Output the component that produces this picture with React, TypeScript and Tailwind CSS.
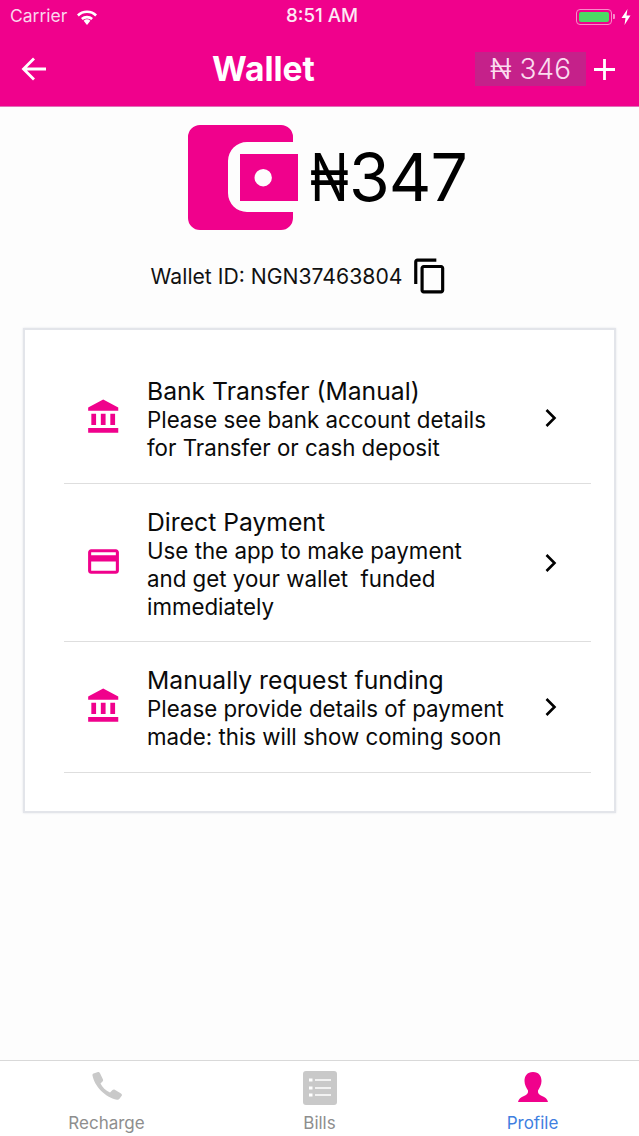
// App.tsx - wallet screen
const PINK = "#f0018c"

function BankIcon() {
  return (
    <svg className="mb-[6px]" width="38" height="38" viewBox="0 0 24 24" fill={PINK}>
      <path d="M4 10v7h3v-7H4zm6 0v7h3v-7h-3zM2 22h19v-3H2v3zm14-12v7h3v-7h-3zm-4.500-9L2 6v2h19V6l-9.500-5z" />
    </svg>
  )
}

function CardIcon() {
  return (
    <svg className="mb-[6px]" width="37" height="37" viewBox="0 0 24 24" fill={PINK}>
      <path d="M20 4H4c-1.110 0-1.990.89-1.990 2L2 18c0 1.110.89 2 2 2h16c1.110 0 2-.89 2-2V6c0-1.110-.89-2-2-2zm0 14H4v-6h16v6zm0-10H4V6h16v2z" />
    </svg>
  )
}

function Chevron() {
  return (
    <svg width="16" height="20" viewBox="0 0 16 20" fill="none" stroke="#000" strokeWidth="2.600">
      <path d="M3.500 2 L11.500 10 L3.500 18" />
    </svg>
  )
}

function WalletIcon() {
  return (
    <svg width="110" height="105" viewBox="0 0 110 105">
      <path
        fill={PINK}
        d="M12 0H93a12 12 0 0 1 12 12V17H59a19 19 0 0 0-19 19V68a19 19 0 0 0 19 19H105V93a12 12 0 0 1-12 12H12A12 12 0 0 1 0 93V12A12 12 0 0 1 12 0Z"
      />
      <path fill={PINK} fillRule="evenodd" d="M52 29H110V76H52ZM66.500 52.700a8.700 8.700 0 1 0 17.400 0a8.700 8.700 0 1 0-17.400 0Z" />
    </svg>
  )
}

function Row({ icon, title, lines, pt, pb }: { icon: React.ReactNode; title: string; lines: string[]; pt: string; pb: string }) {
  return (
    <div className={`flex items-center border-b border-[#dedede] ${pt} ${pb}`}>
      <div className="flex w-[83px] justify-center pr-[4px]">{icon}</div>
      <div className="flex-1 text-[22.300px] leading-[28px] text-[#0a0a0a]">
        <div className="mb-[1px] text-[24.700px]">{title}</div>
        {lines.map((l) => (
          <div key={l} className="whitespace-pre">{l}</div>
        ))}
      </div>
      <div className="mr-[32px] mb-[3px] flex">
        <Chevron />
      </div>
    </div>
  )
}

export default function App() {
  return (
    <div className="flex h-[1136px] w-[639px] flex-col overflow-hidden bg-[#fdfdfd] font-['Inter',sans-serif]">
      {/* header */}
      <div className="h-[107px] shrink-0 border-b border-[#e070b8] bg-[#f0018c] text-white">
        <div className="grid h-[33px] grid-cols-3 items-center px-[10px]">
          <div className="flex items-center gap-[9px] text-[17.500px] text-[#fbd6ec]">
            <span>Carrier</span>
            <svg width="22" height="16" viewBox="0 0 22 16" fill="#fff">
              <path d="M11 16 7.600 11.700a5.500 5.500 0 0 1 6.800 0Z" />
              <path d="M11 6.800a9 9 0 0 1 6 2.300l-1.700 2a6.500 6.500 0 0 0-8.600 0l-1.700-2a9 9 0 0 1 6-2.300Z" />
              <path d="M11 1.500a14 14 0 0 1 10 4l-1.800 2a11.500 11.500 0 0 0-16.400 0L1 5.500a14 14 0 0 1 10-4Z" />
            </svg>
          </div>
          <div className="pl-[5px] text-center text-[18.700px] font-medium text-[#fde9f5]">8:51 AM</div>
          <div className="-mr-[2px] flex items-center justify-end">
            <div className="flex h-[16px] w-[36px] items-center rounded-[4px] border border-[#f98ccb] p-[2px]">
              <div className="h-full w-full rounded-[2px] bg-[#4cd964]" />
            </div>
            <div className="ml-[1px] h-[5px] w-[2px] rounded-r-[1px] bg-[#f98ccb]" />
            <svg className="ml-[6px]" width="10" height="16" viewBox="0 0 10 16" fill="#fff">
              <path d="M6.500 0 0.500 9H4.500L3.500 16 9.500 6.500H5.500Z" />
            </svg>
          </div>
        </div>
        <div className="mt-[19px] flex h-[34px] items-center justify-between pl-[21px] pr-[23px]">
          <svg width="26" height="26" viewBox="0 0 26 26" fill="none" stroke="#fff" strokeWidth="2.800">
            <path d="M25 13H3M13 2.500 2.500 13 13 23.500" />
          </svg>
          <div className="ml-[165px] text-[33.600px] font-bold">Wallet</div>
          <div className="ml-auto flex items-center gap-[7px]">
            <div className="flex h-[34px] w-[111px] items-center justify-center bg-[#c5218a] text-[28px] font-light text-[#fbdcef]">
              ₦&nbsp;346
            </div>
            <svg width="23" height="23" viewBox="0 0 23 23" stroke="#fff" strokeWidth="2.800">
              <path d="M11.500 1V22M1 11.500H22" />
            </svg>
          </div>
        </div>
      </div>

      {/* main */}
      <div className="flex-1 px-[23px] pt-[18px]">
        <div className="flex items-center justify-start gap-[12px] pl-[165px]">
          <WalletIcon />
          <div className="text-[66px] leading-[105px] font-normal tracking-[-1px] whitespace-nowrap text-black">
            <span className="inline-block w-[39px] origin-left scale-x-[.765]">₦</span>347
          </div>
        </div>
        <div className="mt-[28px] flex h-[36px] items-center justify-center gap-[9px] pr-[39px] text-[21.200px] text-[#111]">
          <span className="mt-[1px]">Wallet ID: NGN37463804</span>
          <svg width="38" height="38" viewBox="0 0 24 24" fill="#000">
            <path d="M16 1H4c-1.100 0-2 .9-2 2v14h2V3h12V1zm3 4H8c-1.100 0-2 .9-2 2v14c0 1.100.9 2 2 2h11c1.100 0 2-.9 2-2V7c0-1.100-.9-2-2-2zm0 16H8V7h11v14z" />
          </svg>
        </div>
        <div className="mt-[34px] h-[485px] border-2 border-[#e3e5ea] bg-white pt-[22px] pr-[23px] pl-[39px] shadow-[0_0_2px_#e3e5ea]">
          <Row
            icon={<BankIcon />}
            title="Bank Transfer (Manual)"
            lines={["Please see bank account details", "for Transfer or cash deposit"]}
            pt="pt-[25px]"
            pb="pb-[21px]"
          />
          <Row
            icon={<CardIcon />}
            title="Direct Payment"
            lines={["Use the app to make payment", "and get your wallet  funded", "immediately"]}
            pt="pt-[24px]"
            pb="pb-[20px]"
          />
          <Row
            icon={<BankIcon />}
            title="Manually request funding"
            lines={["Please provide details of payment", "made: this will show coming soon"]}
            pt="pt-[24px]"
            pb="pb-[21px]"
          />
        </div>
      </div>

      {/* tabs */}
      <div className="grid h-[76px] shrink-0 grid-cols-3 border-t border-[#d9d9d9] bg-white pt-[10px] text-[17px] leading-[20px]">
        <div className="flex flex-col items-center">
          <div className="flex h-[34px] items-center">
            <svg className="mb-[4px]" width="30" height="28" viewBox="0 0 30 28" fill="#c9c9c9">
              <path d="M1.500 1.500 6 0C7 -.2 7.500.3 8 1.200L11 7.500C11.300 8.300 11 9 10.500 9.500L8.500 11.500C10.500 15.500 13.500 18.500 18 20.500L20.500 18C21.200 17.300 22 17.200 22.800 17.700L29 21.500C30 22.200 30.200 23 29.700 23.800L27.500 26.800C26.800 27.800 26 28 25 27.800 13 25.500 2.500 14 .5 3.500.3 2.500.7 1.800 1.500 1.500Z" />
            </svg>
          </div>
          <span className="mt-[8px] text-[#8e8e8e]">Recharge</span>
        </div>
        <div className="flex flex-col items-center">
          <svg width="34" height="34" viewBox="0 0 34 34">
            <rect width="34" height="34" rx="3" fill="#c9c9c9" />
            <path d="M12 9H28M12 17H28M12 24H28" stroke="#fff" strokeWidth="1.600" />
            <path d="M6 9H9.500M6 17H9.500M6 24H9.500" stroke="#fff" strokeWidth="3" />
          </svg>
          <span className="mt-[8px] text-[#8e8e8e]">Bills</span>
        </div>
        <div className="flex flex-col items-center">
          <div className="flex h-[34px] items-center">
            <svg className="mb-[2px]" width="30" height="30" viewBox="0 0 30 30" fill={PINK}>
              <path d="M15 0C21 0 23.500 4 23.500 9C23.500 13 21.500 16 20 18.500C19.500 21 21 23 24 24C27 25 29.500 27 30 30H0C.5 27 3 25 6 24C9 23 10.500 21 10 18.500C8.500 16 6.500 13 6.500 9C6.500 4 9 0 15 0Z" />
            </svg>
          </div>
          <span className="mt-[8px] text-[#3f7fe0]">Profile</span>
        </div>
      </div>
    </div>
  )
}
